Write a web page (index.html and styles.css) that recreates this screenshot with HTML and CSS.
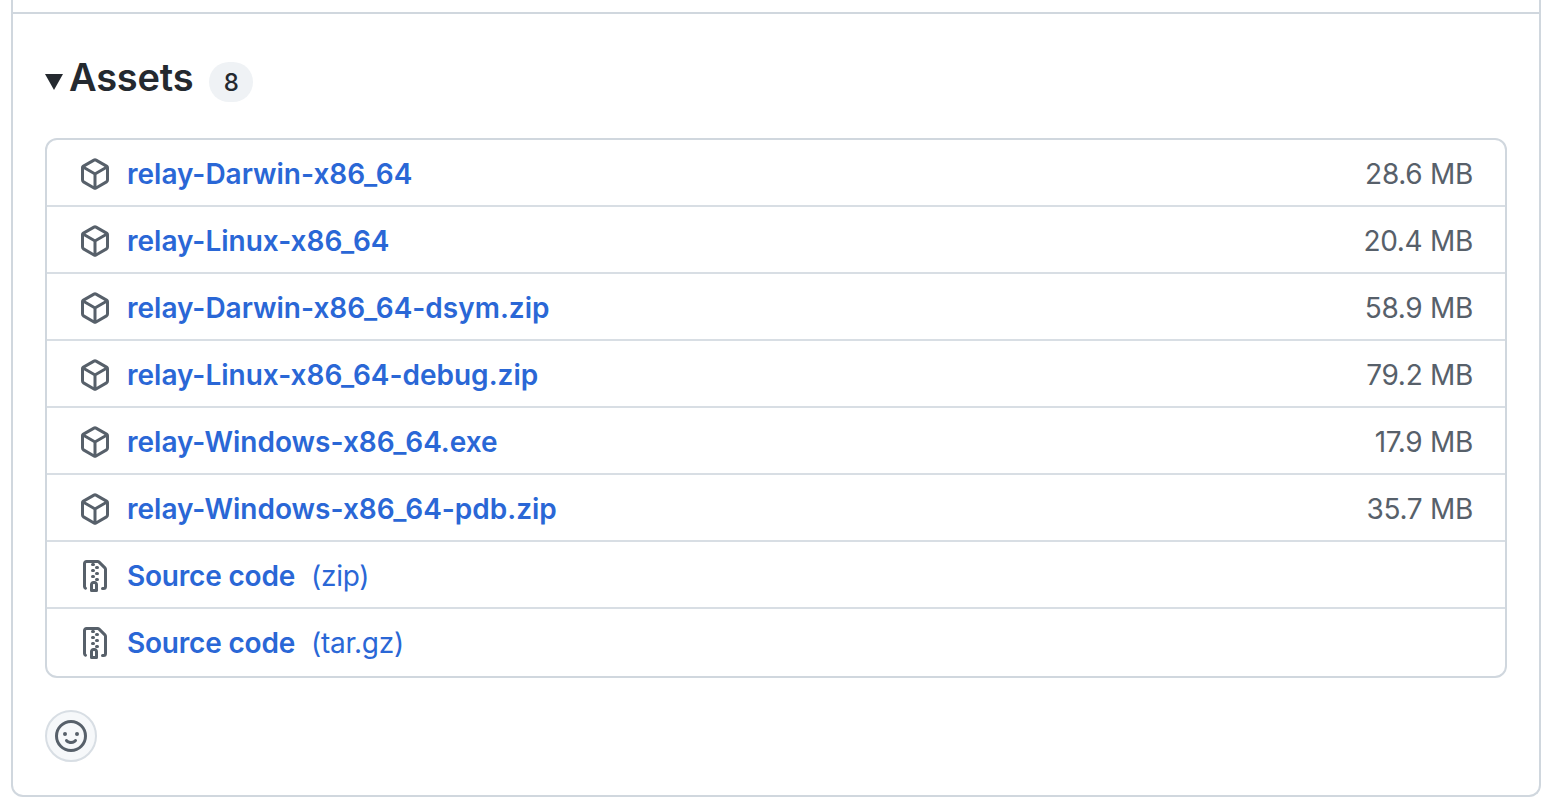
FILE: index.html
```html
<!DOCTYPE html>
<html lang="en">
<head>
<meta charset="utf-8">
<title>Assets</title>
<link rel="stylesheet" href="styles.css">
</head>
<body>
<svg class="defs" width="0" height="0" aria-hidden="true">
  <symbol id="pkg" viewBox="0 0 16 16"><path d="m8.878.392 5.25 3.045c.54.314.872.89.872 1.514v6.098a1.75 1.75 0 0 1-.872 1.514l-5.25 3.045a1.75 1.75 0 0 1-1.756 0l-5.25-3.045A1.75 1.75 0 0 1 1 11.049V4.951c0-.624.332-1.201.872-1.514L7.122.392a1.75 1.75 0 0 1 1.756 0ZM7.875 1.69l-4.63 2.685L8 7.133l4.755-2.758-4.63-2.685a.248.248 0 0 0-.25 0ZM2.5 5.677v5.372c0 .09.047.171.125.216l4.625 2.683V8.432Zm6.25 8.271 4.625-2.683a.25.25 0 0 0 .125-.216V5.677L8.75 8.432Z"/></symbol>
  <symbol id="zip" viewBox="0 0 16 16"><path d="M3.5 1.75v11.5c0 .09.048.173.126.217a.75.75 0 0 1-.752 1.298A1.748 1.748 0 0 1 2 13.25V1.75C2 .784 2.784 0 3.75 0h5.586c.464 0 .909.185 1.237.513l2.914 2.914c.329.328.513.773.513 1.237v8.586A1.75 1.75 0 0 1 12.25 15h-.5a.75.75 0 0 1 0-1.5h.5a.25.25 0 0 0 .25-.25V4.664a.25.25 0 0 0-.073-.177L9.513 1.573a.25.25 0 0 0-.177-.073H7.25a.75.75 0 0 1 0 1.5h-.5a.75.75 0 0 1 0-1.5h-3a.25.25 0 0 0-.25.25Zm3.75 8.75h.5c.966 0 1.75.784 1.75 1.75v3a.75.75 0 0 1-.75.75h-2.5a.75.75 0 0 1-.75-.75v-3c0-.966.784-1.75 1.75-1.75ZM6 5.25a.75.75 0 0 1 .75-.75h.5a.75.75 0 0 1 0 1.5h-.5A.75.75 0 0 1 6 5.25Zm.75 2.25h.5a.75.75 0 0 1 0 1.5h-.5a.75.75 0 0 1 0-1.5ZM8 6.75A.75.75 0 0 1 8.75 6h.5a.75.75 0 0 1 0 1.5h-.5A.75.75 0 0 1 8 6.75ZM8.75 3h.5a.75.75 0 0 1 0 1.5h-.5a.75.75 0 0 1 0-1.5ZM8 9.75A.75.75 0 0 1 8.75 9h.5a.75.75 0 0 1 0 1.5h-.5A.75.75 0 0 1 8 9.75Zm-1 2.5v2.25h1v-2.25a.25.25 0 0 0-.25-.25h-.5a.25.25 0 0 0-.25.25Z"/></symbol>
</svg>
<main class="card">
  <div class="top-rule"></div>
  <section class="assets">
    <div class="assets-head">
      <span class="caret"></span>
      <h2 class="title">Assets</h2>
      <span class="counter">8</span>
    </div>
    <ul class="list">
      <li class="row"><div class="name"><svg class="icon"><use href="#pkg"/></svg><a class="link" href="#">relay-Darwin-x86_64</a></div><span class="size">28.6 MB</span></li>
      <li class="row"><div class="name"><svg class="icon"><use href="#pkg"/></svg><a class="link" href="#">relay-Linux-x86_64</a></div><span class="size">20.4 MB</span></li>
      <li class="row"><div class="name"><svg class="icon"><use href="#pkg"/></svg><a class="link" href="#">relay-Darwin-x86_64-dsym.zip</a></div><span class="size">58.9 MB</span></li>
      <li class="row"><div class="name"><svg class="icon"><use href="#pkg"/></svg><a class="link" href="#">relay-Linux-x86_64-debug.zip</a></div><span class="size">79.2 MB</span></li>
      <li class="row"><div class="name"><svg class="icon"><use href="#pkg"/></svg><a class="link" href="#">relay-Windows-x86_64.exe</a></div><span class="size">17.9 MB</span></li>
      <li class="row"><div class="name"><svg class="icon"><use href="#pkg"/></svg><a class="link" href="#">relay-Windows-x86_64-pdb.zip</a></div><span class="size">35.7 MB</span></li>
      <li class="row"><div class="name"><svg class="icon"><use href="#zip"/></svg><a class="link source" href="#">Source code</a><span class="ext">(zip)</span></div></li>
      <li class="row"><div class="name"><svg class="icon"><use href="#zip"/></svg><a class="link source" href="#">Source code</a><span class="ext">(tar.gz)</span></div></li>
    </ul>
    <button class="react" type="button" aria-label="Add reaction">
      <svg class="icon" viewBox="0 0 16 16"><path d="M8 0a8 8 0 1 1 0 16A8 8 0 0 1 8 0ZM1.5 8a6.5 6.5 0 1 0 13 0 6.5 6.5 0 0 0-13 0Zm3.82 1.636a.75.75 0 0 1 1.038.175l.007.009c.103.118.22.222.35.31.264.178.683.37 1.285.37.602 0 1.02-.192 1.285-.371.13-.088.247-.192.35-.31l.007-.008a.75.75 0 0 1 1.222.87l-.022-.015c.02.013.021.015.021.015v.001l-.001.002-.002.003-.005.007-.014.019a2.066 2.066 0 0 1-.184.213c-.16.166-.338.316-.53.445-.63.418-1.37.638-2.127.629-.946 0-1.652-.308-2.126-.63a3.331 3.331 0 0 1-.715-.657l-.014-.02-.005-.006-.002-.003v-.002h-.001l.613-.432-.614.43a.75.75 0 0 1 .183-1.044ZM12 7a1 1 0 1 1-2 0 1 1 0 0 1 2 0ZM5 8a1 1 0 1 1 0-2 1 1 0 0 1 0 2Zm5.25 2.25.592.416a97.71 97.71 0 0 0-.592-.416Z"/></svg>
    </button>
  </section>
</main>
</body>
</html>
```
FILE: styles.css
```css
* { box-sizing: border-box; }
html, body { margin: 0; background: #fff; }
body {
  width: 1556px;
  height: 812px;
  overflow: hidden;
  padding: 0 15px 15px 11px;
  font-family: Inter, "Liberation Sans", sans-serif;
  color: #24292f;
}
.defs { display: block; height: 0; }
.card {
  height: 797px;
  border: 2px solid #d0d7de;
  border-top: 0;
  border-radius: 0 0 12px 12px;
}
.top-rule { height: 14px; border-bottom: 2px solid #d0d7de; }
.assets { padding: 46px 32px 0; }
.assets-head { display: flex; align-items: center; height: 44px; }
.caret {
  flex: none;
  width: 18px;
  height: 16px;
  margin-right: 6px;
  background: #24292f;
  clip-path: polygon(0 0, 100% 0, 50% 100%);
}
.title { margin: 0 0 10px; font-size: 38px; font-weight: 600; line-height: 44px; letter-spacing: -0.2px; }
.counter {
  display: flex;
  align-items: center;
  justify-content: center;
  width: 44px;
  height: 40px;
  margin-left: 16px;
  border-radius: 20px;
  background: #eff2f5;
  font-size: 24px;
  font-weight: 500;
}
.list {
  list-style: none;
  margin: 34px 0 0;
  padding: 0;
  border: 2px solid #d0d7de;
  border-radius: 12px;
  width: 1462px;
}
.row {
  display: flex;
  align-items: center;
  justify-content: space-between;
  height: 67px;
  padding: 2px 32px 0;
  border-top: 2px solid #d8dee4;
}
.row:first-child { border-top: 0; height: 65px; }
.row:last-child { height: 69px; padding-bottom: 2px; }
.name { display: flex; align-items: center; }
.icon { width: 32px; height: 32px; fill: #57606a; display: block; }
.row .icon { margin-right: 16px; }
.link { color: #2a67d6; font-size: 28px; font-weight: 600; text-decoration: none; }
.source { letter-spacing: -0.2px; }
.ext { margin-left: 16px; color: #2a67d6; font-size: 28px; font-weight: 400; letter-spacing: -0.25px; }
.size { color: #57606a; font-size: 28px; font-weight: 400; letter-spacing: -0.3px; }
.react {
  display: flex;
  align-items: center;
  justify-content: center;
  width: 52px;
  height: 52px;
  margin-top: 32px;
  padding: 0;
  border: 2px solid #d8dee4;
  border-radius: 50%;
  background: #f6f8fa;
}
```
